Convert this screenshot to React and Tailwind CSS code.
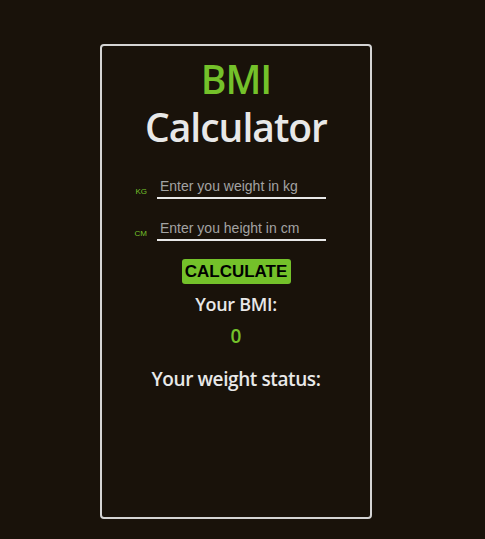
import { useState } from 'react';

const App = () => {
  const [weight, setWeight] = useState('');
  const [height, setHeight] = useState('');
  const [bmi, setBmi] = useState(0);
  const [status, setStatus] = useState('');

  const calculate = () => {
    const w = parseFloat(weight);
    const h = parseFloat(height) / 100;
    if (!w || !h) return;
    const value = +(w / (h * h)).toFixed(1);
    setBmi(value);
    if (value < 18.5) setStatus('Underweight');
    else if (value < 25) setStatus('Normal');
    else if (value < 30) setStatus('Overweight');
    else setStatus('Obese');
  };

  return (
    <div className="min-h-[539px] w-full bg-[#19120a] pt-[44px] font-['Open_Sans',sans-serif]">
      <div className="ml-[100px] w-[272px] h-[475px] rounded-[4px] border-2 border-[#d4d4d4] flex flex-col items-center">
        <h1 className="mt-[8px] text-[39px] leading-[50px] font-semibold text-[#74c12a] tracking-[-1px]">BMI</h1>
        <h1 className="text-[39px] leading-[46px] font-semibold text-[#e8e8e8] tracking-[-1px]">Calculator</h1>

        <div className="mt-[27px] flex items-end w-full">
          <span className="w-[55px] text-right pr-[10px] text-[8px] leading-[14px] text-[#74c12a] font-['Liberation_Sans',sans-serif]">KG</span>
          <input
            value={weight}
            onChange={(e) => setWeight(e.target.value)}
            placeholder="Enter you weight in kg"
            className="w-[169px] bg-transparent border-b-2 border-[#e8e8e8] px-[3px] pb-[2px] text-[14px] leading-[18px] text-[#e8e8e8] placeholder:text-[#a3a3a3] outline-none font-['Liberation_Sans',sans-serif]"
          />
        </div>

        <div className="mt-[20px] flex items-end w-full">
          <span className="w-[55px] text-right pr-[10px] text-[8px] leading-[14px] text-[#74c12a] font-['Liberation_Sans',sans-serif]">CM</span>
          <input
            value={height}
            onChange={(e) => setHeight(e.target.value)}
            placeholder="Enter you height in cm"
            className="w-[169px] bg-transparent border-b-2 border-[#e8e8e8] px-[3px] pb-[2px] text-[14px] leading-[18px] text-[#e8e8e8] placeholder:text-[#a3a3a3] outline-none font-['Liberation_Sans',sans-serif]"
          />
        </div>

        <button
          onClick={calculate}
          className="mt-[18px] w-[109px] h-[25px] rounded-[3px] bg-[#74c12a] text-black font-bold text-[17px] leading-[25px] font-['Liberation_Sans',sans-serif]"
        >
          CALCULATE
        </button>

        <p className="mt-[8px] text-[18px] leading-[24px] font-semibold text-[#e8e8e8] tracking-[-0.3px]">Your BMI:</p>
        <p className="mt-[8px] text-[19px] leading-[24px] font-semibold text-[#74c12a]">{bmi}</p>
        <p className="mt-[18px] text-[19px] leading-[26px] font-semibold text-[#e8e8e8] tracking-[-0.4px]">Your weight status:</p>
        {status && <p className="mt-[6px] text-[18px] font-semibold text-[#74c12a]">{status}</p>}
      </div>
    </div>
  );
};

export default App;
